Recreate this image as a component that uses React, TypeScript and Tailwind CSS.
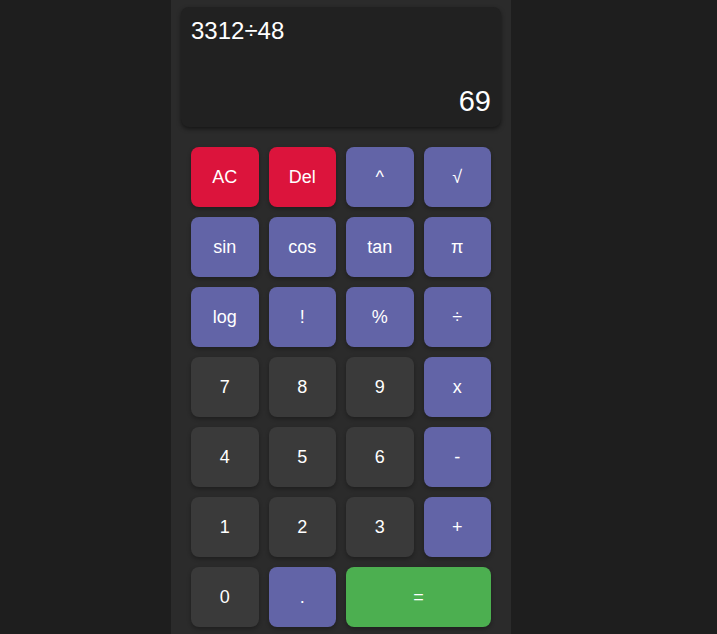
import React, { useState } from 'react';

type Key = { label: string; kind: 'red' | 'op' | 'num' | 'eq'; wide?: boolean };

const keys: Key[] = [
  { label: 'AC', kind: 'red' },
  { label: 'Del', kind: 'red' },
  { label: '^', kind: 'op' },
  { label: '√', kind: 'op' },
  { label: 'sin', kind: 'op' },
  { label: 'cos', kind: 'op' },
  { label: 'tan', kind: 'op' },
  { label: 'π', kind: 'op' },
  { label: 'log', kind: 'op' },
  { label: '!', kind: 'op' },
  { label: '%', kind: 'op' },
  { label: '÷', kind: 'op' },
  { label: '7', kind: 'num' },
  { label: '8', kind: 'num' },
  { label: '9', kind: 'num' },
  { label: 'x', kind: 'op' },
  { label: '4', kind: 'num' },
  { label: '5', kind: 'num' },
  { label: '6', kind: 'num' },
  { label: '-', kind: 'op' },
  { label: '1', kind: 'num' },
  { label: '2', kind: 'num' },
  { label: '3', kind: 'num' },
  { label: '+', kind: 'op' },
  { label: '0', kind: 'num' },
  { label: '.', kind: 'op' },
  { label: '=', kind: 'eq', wide: true },
];

const kindClass: Record<Key['kind'], string> = {
  red: 'bg-[#dc143c]',
  op: 'bg-[#6264a7]',
  num: 'bg-[#3a3a3a]',
  eq: 'bg-[#4caf50]',
};

export default function App() {
  const [expr] = useState('3312÷48');
  const [result] = useState('69');

  return (
    <div className="min-h-[634px] bg-[#1e1e1e] flex font-['Liberation_Sans',Arial,sans-serif] text-white">
      <div className="ml-[171px] w-[340px] bg-[#2b2b2b] px-2.5 pt-[7px] pb-4">
        <div className="h-[120px] rounded-lg bg-[#212121] shadow-[0_2px_4px_rgba(0,0,0,0.5)] px-2.5 pt-[10px] pb-[10px] flex flex-col justify-between">
          <div className="text-[24px] leading-[28px]">{expr}</div>
          <div className="text-[29px] leading-[32px] text-right">{result}</div>
        </div>

        <div className="mt-5 px-2.5 grid grid-cols-4 gap-2.5">
          {keys.map((k) => (
            <button
              key={k.label}
              className={`h-[60px] rounded-lg text-[18px] text-white shadow-[0_2px_4px_rgba(0,0,0,0.3)] flex items-center justify-center ${kindClass[k.kind]} ${k.wide ? 'col-span-2' : ''}`}
            >
              {k.label}
            </button>
          ))}
        </div>
      </div>
    </div>
  );
}
